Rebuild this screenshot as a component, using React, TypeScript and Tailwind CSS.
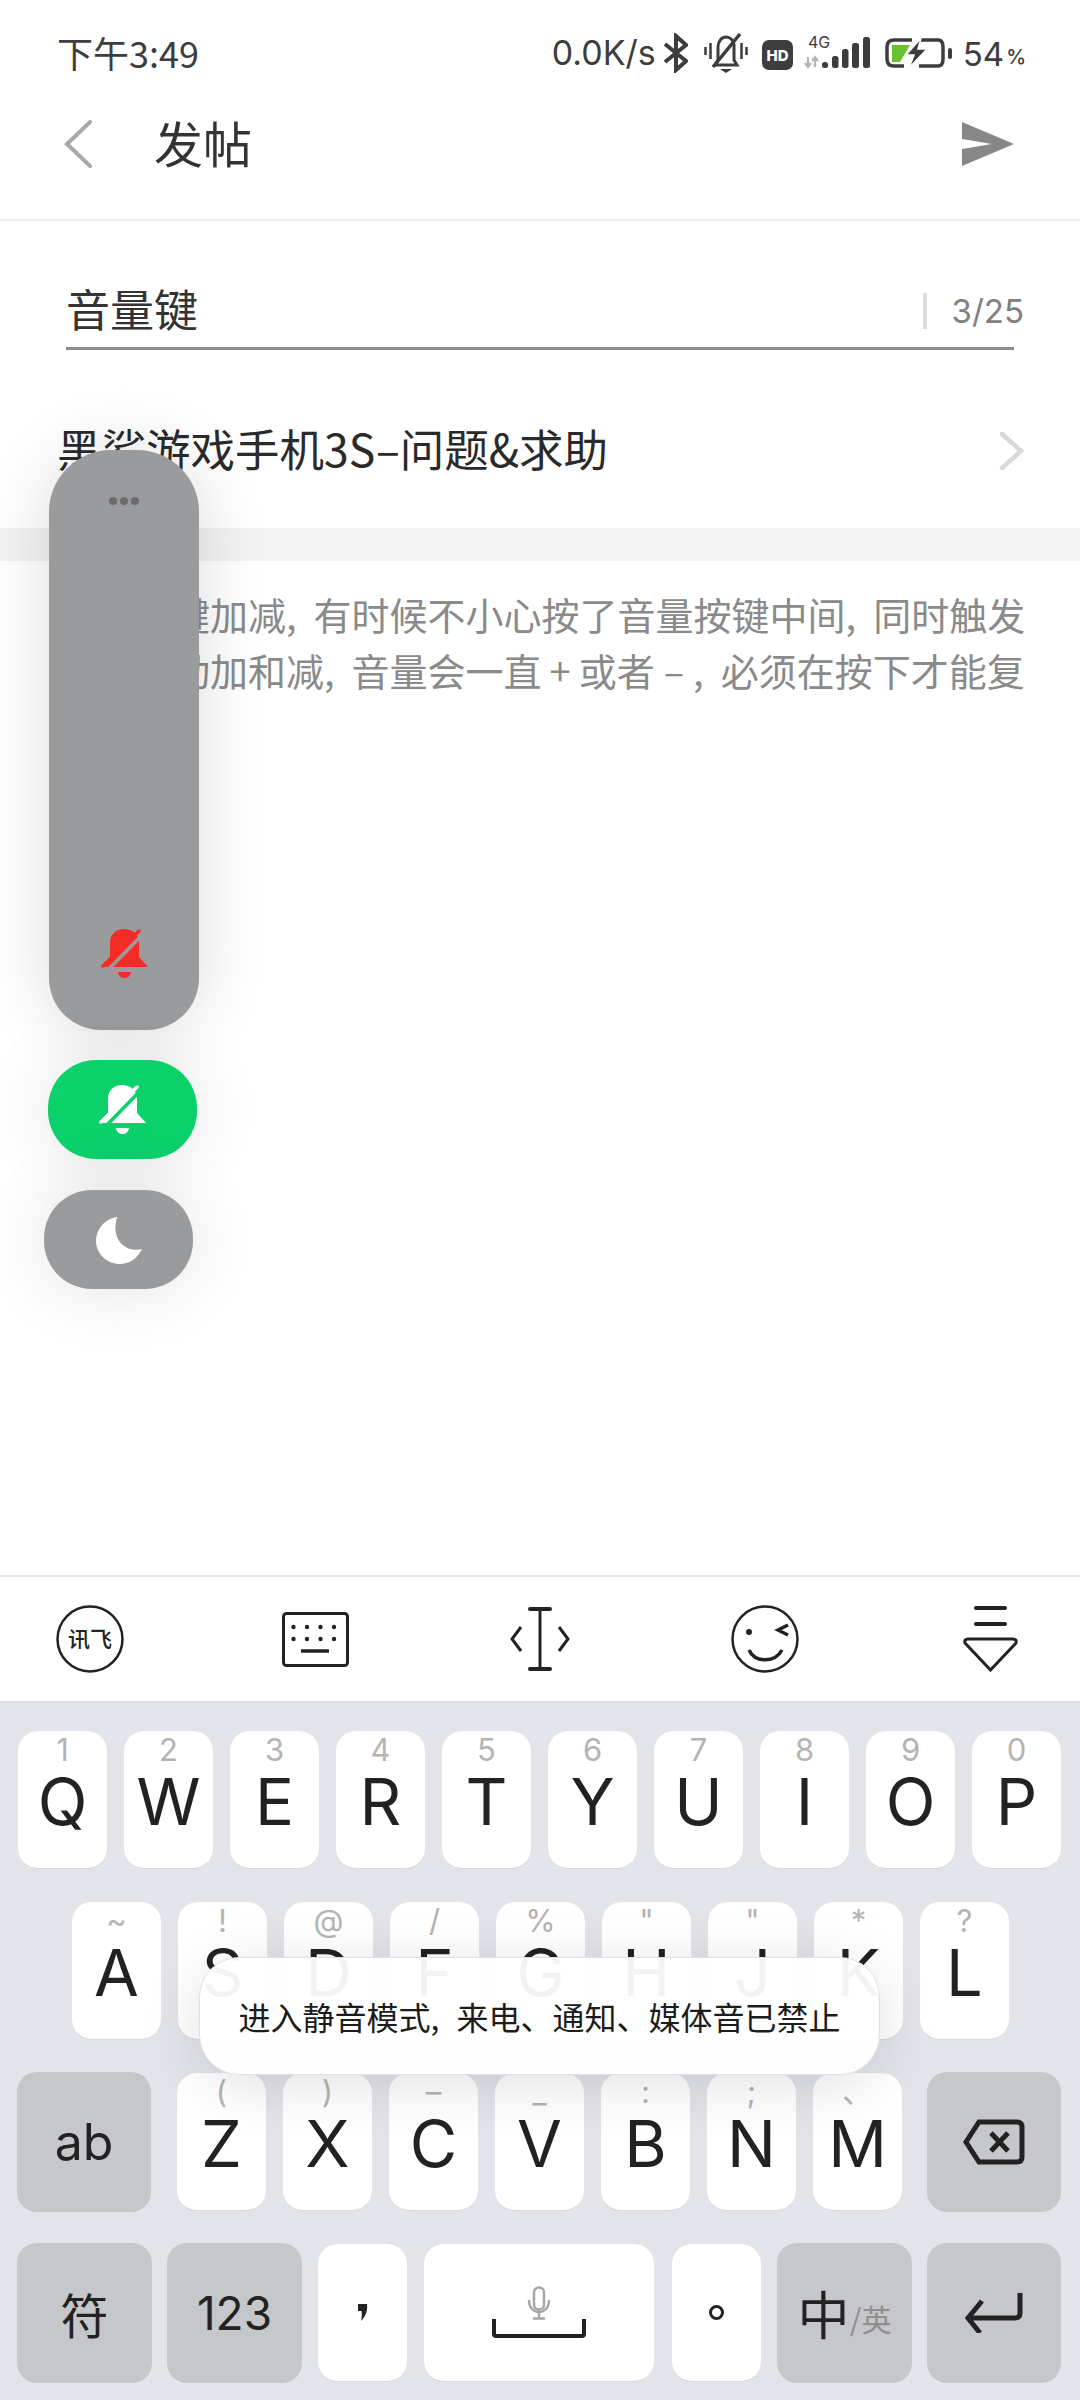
const cjk = '"Noto Sans CJK SC", sans-serif';
const latin = 'Inter, "Noto Sans CJK SC", sans-serif';

function Bell({ color, cut }: { color: string; cut: string }) {
  return (
    <svg width="47" height="50" viewBox="0 0 47 50">
      <path d="M0 38 L9 28 V14 C9 5 15 0 23 0 C31 0 38 5 38 14 V28 L47 38 Z" fill={color} />
      <path d="M17 43 H30 C29 51 18 51 17 43 Z" fill={color} />
      <path d="M3 45 L46 1" stroke={cut} strokeWidth="3.5" />
      <path d="M2 37 L38 2" stroke={color} strokeWidth="3.5" strokeLinecap="round" />
    </svg>
  );
}

function Key({ hint, letter }: { hint: string; letter: string }) {
  return (
    <div className="relative w-[89px] h-[138px] rounded-[20px] bg-white border-b border-[#d8d9df] flex flex-col items-center text-[#222]">
      <span className="h-[38px] text-[31px] leading-[38px] text-[#b4b4b4]">{hint}</span>
      <span className="text-[65px] leading-[65px] font-normal">{letter}</span>
    </div>
  );
}

function Row({ keys }: { keys: string[][] }) {
  return (
    <>
      {keys.map(([h, l]) => (
        <Key key={l} hint={h} letter={l} />
      ))}
    </>
  );
}

function FnKey({ w, children }: { w: string; children: React.ReactNode }) {
  return (
    <div className={`${w} h-[140px] rounded-[20px] bg-[#c6c7cb] flex items-center justify-center text-[#222]`}>
      {children}
    </div>
  );
}

function BodyComma() {
  return <span className="mr-[17px]">,</span>;
}

function ToolCell({ children }: { children: React.ReactNode }) {
  return <div className="w-[68px] flex items-center justify-center">{children}</div>;
}

export default function App() {
  return (
    <div className="relative w-[1080px] h-[2400px] bg-white overflow-hidden" style={{ fontFamily: latin }}>
      {/* status bar */}
      <div className="h-[104px] flex items-start justify-between pl-[57px] pr-[54px] pt-[32px] text-[#3d3d3d]">
        <span className="text-[36px] leading-[40px]" style={{ fontFamily: cjk }}>下午3:49</span>
        <div className="flex items-center h-[42px]">
          <span className="text-[34px] leading-[40px]">0.0K/s</span>
          <svg className="ml-[7px]" width="25" height="40" viewBox="0 0 25 40" fill="none" stroke="#3d3d3d" strokeWidth="4">
            <path d="M2 11 L23 28 L13 37 V3 L23 12 L2 29" />
          </svg>
          <svg className="ml-[16px]" width="44" height="40" viewBox="0 0 44 40" fill="none" stroke="#3d3d3d" strokeWidth="3">
            <path d="M1.5 14 V22 M6.5 10 V26 M37.5 10 V26 M42.5 14 V22" strokeWidth="2.5" />
            <path d="M11 32 L14 27 V14 C14 8 18 4 22 4 C26 4 30 7 30 13 V27 L33 32 Z" />
            <path d="M9 34 L36 1" strokeWidth="3.5" />
            <path d="M16 36 H28 L22 40 Z" fill="#3d3d3d" stroke="none" />
          </svg>
          <svg className="ml-[14px] mt-[3px]" width="31" height="30" viewBox="0 0 31 30">
            <rect width="31" height="30" rx="7" fill="#3d3d3d" />
            <text x="15.5" y="20.5" textAnchor="middle" fontSize="15" fontWeight="800" fill="#fff" fontFamily="Inter, sans-serif">HD</text>
          </svg>
          <svg className="ml-[11px]" width="67" height="34" viewBox="0 0 67 34">
            <text x="4" y="11.5" fontSize="16" fill="#3d3d3d" fontFamily="Inter, sans-serif">4G</text>
            <path d="M4 21 V31 M1 27 L4 31 L7 27 M11 31 V21 M8 25 L11 21 L14 25" stroke="#b5b5b5" strokeWidth="2.2" fill="none" />
            <rect x="18" y="26" width="6" height="6" rx="2.5" fill="#3d3d3d" />
            <rect x="28" y="20" width="6.5" height="12" rx="2.5" fill="#3d3d3d" />
            <rect x="38" y="13" width="6.5" height="19" rx="2.5" fill="#3d3d3d" />
            <rect x="48" y="7" width="7" height="25" rx="2.5" fill="#3d3d3d" />
            <rect x="59" y="1" width="7" height="31" rx="2.5" fill="#3d3d3d" />
          </svg>
          <svg className="ml-[14px]" width="68" height="30" viewBox="0 0 68 30">
            <path d="M27 2 H9 Q2 2 2 9 V21 Q2 28 9 28 H19 M36 2 H53 Q58 2 58 9 V21 Q58 28 53 28 H34" fill="none" stroke="#3d3d3d" strokeWidth="3.5" />
            <path d="M7 7 H25 L15 24 H7 Z" fill="#66c32e" />
            <path d="M36 0 L21 17 H29 L24 30 L42 11 H33 Z" fill="#3d3d3d" stroke="#fff" strokeWidth="1.5" />
            <rect x="63" y="10" width="4" height="11" rx="2" fill="#3d3d3d" />
          </svg>
          <span className="ml-[10px] mt-[2px] text-[33px] leading-[40px]">54</span>
          <span className="ml-[2px] text-[20px] leading-[40px] mt-[7px] font-medium">%</span>
        </div>
      </div>

      {/* nav bar */}
      <div className="h-[117px] border-b-2 border-[#eeeeee] flex items-start pl-[64px] pr-[66px] pt-[16px]">
        <svg width="28" height="48" viewBox="0 0 28 48" fill="none" strokeWidth="4" strokeLinecap="round">
          <path d="M26 2 L3 24 L26 46" stroke="#a9a9a9" />
        </svg>
        <span className="ml-[62px] mt-[-3px] text-[49px] leading-[50px] text-[#333]" style={{ fontFamily: cjk }}>发帖</span>
        <svg className="ml-auto mt-[2px]" width="52" height="44" viewBox="0 0 52 44">
          <path d="M0 0 L52 22 L0 44 V27 L30 22 L0 17 Z" fill="#878787" />
        </svg>
      </div>

      {/* title field */}
      <div className="h-[130px] pt-[62px] pl-[66px] pr-[66px]">
        <div className="h-[50px] flex items-center">
          <span className="text-[44px] leading-[50px] text-[#333]" style={{ fontFamily: cjk }}>音量键</span>
          <div className="ml-auto mt-[6px] w-[4px] h-[36px] bg-[#dddddd]" />
          <span className="ml-[25px] mr-[-10px] mt-[6px] text-[33px] leading-[40px] text-[#808080]">3/25</span>
        </div>
        <div className="mt-[14px] h-[3px] w-[948px] bg-[#8e8e8e]" />
      </div>

      {/* section row */}
      <div className="h-[177px] pl-[57px] pr-[56px] flex items-start justify-between pt-[69px]">
        <span className="text-[44.5px] leading-[56px] text-[#2a2a2a] whitespace-nowrap" style={{ fontFamily: cjk }}>黑鲨游戏手机3S–问题&amp;求助</span>
        <svg className="mt-[12px]" width="25" height="38" viewBox="0 0 25 38" fill="none" stroke="#d8d8d8" strokeWidth="4.5" strokeLinecap="round">
          <path d="M3 2 L22 19 L3 36" />
        </svg>
      </div>

      {/* grey band */}
      <div className="h-[33px] bg-[#f3f3f3]" />

      {/* body */}
      <div className="h-[1014px] pl-[58px] pr-[56px] pt-[25px] text-[38px] leading-[56px] text-[#8a8a8a]" style={{ fontFamily: cjk }}>
        <p className="whitespace-nowrap">音量按键加减<BodyComma />有时候不小心按了音量按键中间<BodyComma />同时触发</p>
        <p className="whitespace-nowrap">音量自动加和减<BodyComma />音量会一直<span className="px-[8px]">+</span>或者<span className="px-[9px]">–</span><BodyComma />必须在按下才能复</p>
      </div>

      {/* candidate toolbar */}
      <div className="h-[128px] border-t-2 border-[#e6e6e6] border-b-2 border-b-[#dcdde2] flex items-center justify-between px-[56px]">
        <ToolCell>
          <svg width="68" height="68" viewBox="0 0 68 68">
            <circle cx="34" cy="34" r="32.5" fill="none" stroke="#222" strokeWidth="2.5" />
            <text x="34" y="42" textAnchor="middle" fontSize="22" fontWeight="500" fill="#222" fontFamily='"Noto Sans CJK SC", sans-serif'>讯飞</text>
          </svg>
        </ToolCell>
        <ToolCell>
          <svg width="67" height="55" viewBox="0 0 67 55" fill="none" stroke="#222">
            <rect x="1.5" y="1.5" width="64" height="52" rx="3" strokeWidth="3" />
            <g fill="#222" stroke="none">
              <circle cx="11.5" cy="15" r="2.2" /><circle cx="25" cy="15" r="2.2" /><circle cx="38.5" cy="15" r="2.2" /><circle cx="52" cy="15" r="2.2" />
              <circle cx="11.5" cy="27" r="2.2" /><circle cx="25" cy="27" r="2.2" /><circle cx="38.5" cy="27" r="2.2" /><circle cx="52" cy="27" r="2.2" />
            </g>
            <path d="M19 39 H47" strokeWidth="3.5" />
          </svg>
        </ToolCell>
        <ToolCell>
          <svg width="60" height="64" viewBox="0 0 60 64" fill="none" stroke="#222" strokeWidth="3">
            <path d="M30 2 V62" />
            <path d="M20 2 H40 M20 62 H40" strokeWidth="4" strokeLinecap="round" />
            <path d="M11 20 L2 32 L11 44 M49 20 L58 32 L49 44" />
          </svg>
        </ToolCell>
        <ToolCell>
          <svg width="68" height="68" viewBox="0 0 68 68" fill="none" stroke="#222" strokeWidth="2.5">
            <circle cx="34" cy="34" r="32.5" />
            <circle cx="18" cy="27" r="3" fill="#222" stroke="none" />
            <path d="M57 20 L47 25 L57 30" strokeWidth="3.5" />
            <path d="M18 45 C24 58 44 58 51 45" strokeWidth="3.5" />
          </svg>
        </ToolCell>
        <ToolCell>
          <svg width="55" height="66" viewBox="0 0 55 66" fill="none" stroke="#222">
            <path d="M13 2 H42 M13 18 H42" strokeWidth="4" strokeLinecap="round" />
            <path d="M5 33 H50 Q54 33 53 37 L27.5 64 L2 37 Q1 33 5 33 Z" strokeWidth="3" />
          </svg>
        </ToolCell>
      </div>

      {/* keyboard */}
      <div className="h-[697px] bg-[#e2e4ea] pt-[28px]" >
        <div className="flex gap-[17px] pl-[18px]">
          <Row keys={[["1","Q"],["2","W"],["3","E"],["4","R"],["5","T"],["6","Y"],["7","U"],["8","I"],["9","O"],["0","P"]]} />
        </div>
        <div className="flex gap-[17px] pl-[72px] mt-[33px]">
          <Row keys={[["~","A"],["!","S"],["@","D"],["/","F"],["%","G"],["\"","H"],["\"","J"],["*","K"],["?","L"]]} />
        </div>
        <div className="flex pl-[17px] pr-[19px] mt-[32px] items-center">
          <FnKey w="w-[134px]"><span className="text-[50px]">ab</span></FnKey>
          <div className="flex gap-[17px] ml-[26px]">
            <Row keys={[["(","Z"],[")","X"],["–","C"],["_","V"],[":","B"],[";","N"],["、","M"]]} />
          </div>
          <div className="ml-auto">
            <FnKey w="w-[134px]">
              <svg width="62" height="46" viewBox="0 0 62 46" fill="none" stroke="#222" strokeWidth="5">
                <path d="M16 3 H54 Q59 3 59 8 V38 Q59 43 54 43 H16 L3 23 Z" />
                <path d="M28 14 L45 32 M45 14 L28 32" />
              </svg>
            </FnKey>
          </div>
        </div>
        <div className="flex pl-[17px] mt-[31px] items-center">
          <FnKey w="w-[135px]"><span className="text-[48px]" style={{ fontFamily: cjk }}>符</span></FnKey>
          <div className="ml-[15px]"><FnKey w="w-[135px]"><span className="text-[46px]">123</span></FnKey></div>
          <div className="ml-[16px] w-[89px] h-[138px] rounded-[20px] bg-white border-b border-[#d8d9df] flex items-center justify-center">
            <svg width="11" height="19" viewBox="0 0 11 19"><path d="M1 1 H10 C11 8 8 14 4 18 C5 14 5 11 4.5 8 H1 Z" fill="#222" /></svg>
          </div>
          <div className="ml-[17px] w-[230px] h-[138px] rounded-[20px] bg-white border-b border-[#d8d9df] flex flex-col items-center pt-[42px]">
            <svg width="24" height="34" viewBox="0 0 24 34" fill="none" stroke="#a6a6a6" strokeWidth="2.5">
              <rect x="7" y="1.5" width="10" height="22" rx="5" />
              <path d="M2 14 C2 30 22 30 22 14 M12 26 V32 M6 32.5 H18" />
            </svg>
            <svg className="mt-[-1px]" width="94" height="19" viewBox="0 0 94 19" fill="none" stroke="#222" strokeWidth="4">
              <path d="M2 0 V15 Q2 17 4 17 H90 Q92 17 92 15 V0" />
            </svg>
          </div>
          <div className="ml-[18px] w-[89px] h-[138px] rounded-[20px] bg-white border-b border-[#d8d9df] flex items-center justify-center">
            <span className="w-[15px] h-[15px] rounded-full border-[3px] border-[#222]" />
          </div>
          <div className="ml-[16px]">
            <FnKey w="w-[135px]">
              <span className="text-[52px]" style={{ fontFamily: cjk }}>中</span>
              <span className="text-[30px] text-[#8e8e8e] mt-[10px]" style={{ fontFamily: cjk }}>/英</span>
            </FnKey>
          </div>
          <div className="ml-[15px]">
            <FnKey w="w-[134px]">
              <svg width="60" height="40" viewBox="0 0 60 40" fill="none" stroke="#222" strokeWidth="5">
                <path d="M56 0 V20 Q56 25 51 25 H6 M18 8 L4 25 L16 40" />
              </svg>
            </FnKey>
          </div>
        </div>
      </div>

      {/* floating volume panel */}
      <div className="absolute left-[49px] top-[450px] w-[150px] h-[580px] rounded-[52px] rounded-t-[62px] bg-[#9a9b9d] shadow-[0_0_70px_rgba(0,0,0,0.14)] flex flex-col items-center">
        <div className="flex gap-[3px] mt-[47px]">
          <span className="w-[8px] h-[8px] rounded-full bg-[#6c6c6e]" />
          <span className="w-[8px] h-[8px] rounded-full bg-[#6c6c6e]" />
          <span className="w-[8px] h-[8px] rounded-full bg-[#6c6c6e]" />
        </div>
        <div className="mt-auto mb-[51px]">
          <Bell color="#f42c28" cut="#9a9b9d" />
        </div>
      </div>
      <div className="absolute left-[48px] top-[1060px] w-[149px] h-[99px] rounded-[48px] bg-[#0bd16b] shadow-[0_0_70px_rgba(0,0,0,0.12)] flex items-center justify-center">
        <Bell color="#ffffff" cut="#0bd16b" />
      </div>
      <div className="absolute left-[44px] top-[1190px] w-[149px] h-[99px] rounded-[48px] bg-[#9a9b9d] shadow-[0_0_70px_rgba(0,0,0,0.12)] flex items-center justify-center">
        <svg width="46" height="48" viewBox="0 0 46 48">
          <path d="M21 1 C8 3 0 14 0 26 C1 39 12 48 24 48 C33 48 41 43 46 33 C32 37 14 26 21 1 Z" fill="#fff" />
        </svg>
      </div>

      {/* toast */}
      <div className="absolute left-[199px] top-[1957px] w-[681px] h-[118px] rounded-[40px] bg-white/95 border border-[#dfe0e5] shadow-[0_10px_60px_rgba(0,0,0,0.12)] flex justify-center pt-[35px]">
        <span className="text-[32px] leading-[46px] text-[#1c1c1c] whitespace-nowrap" style={{ fontFamily: cjk }}>进入静音模式<span className="mr-[17px]">,</span>来电、通知、媒体音已禁止</span>
      </div>
    </div>
  );
}
